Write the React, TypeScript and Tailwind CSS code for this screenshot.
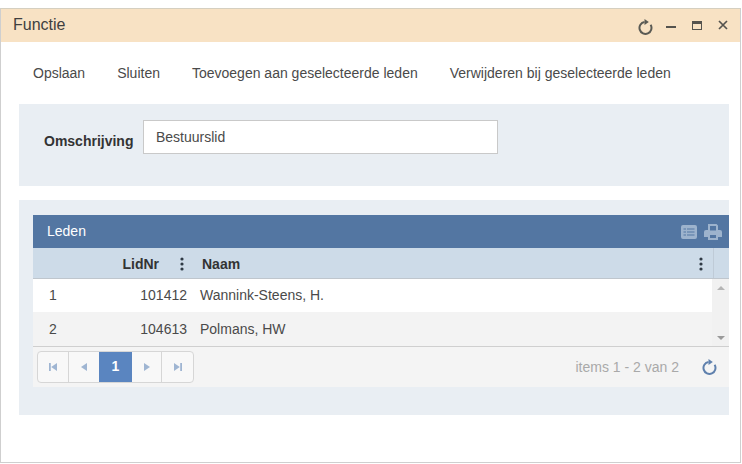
import React from "react";

const Refresh = ({ className }: { className: string }) => (
  <svg viewBox="0 0 15 16" className={className} fill="none">
    <path d="M6.500 3A6 6 0 1 0 12.600 5.800" stroke="currentColor" strokeWidth="2" />
    <path d="M6.500 0 L10.800 3 L6.500 6 Z" fill="currentColor" />
  </svg>
);

const Dots = () => (
  <svg viewBox="0 0 4 14" className="w-[4px] h-[14px]" fill="#2f3a45">
    <circle cx="2" cy="2" r="1.6" />
    <circle cx="2" cy="7" r="1.6" />
    <circle cx="2" cy="12" r="1.6" />
  </svg>
);

const PagerIcon = ({ kind }: { kind: "first" | "prev" | "next" | "last" }) => (
  <svg viewBox="0 0 10 10" className="w-[10px] h-[10px]" fill="#9fb5d2">
    {kind === "first" && <path d="M1 1h1.800v8H1zM9 1v8L3.200 5z" />}
    {kind === "prev" && <path d="M8 1v8L2 5z" />}
    {kind === "next" && <path d="M2 1v8L8 5z" />}
    {kind === "last" && <path d="M1 1v8l5.800-4zM7.200 1H9v8H7.200z" />}
  </svg>
);

export default function App() {
  return (
    <div
      className="w-[742px] h-[464px] bg-white pt-[8px] overflow-hidden text-[14px] text-[#4a4a4a]"
      style={{ fontFamily: '"Liberation Sans", Arial, sans-serif' }}
    >
      <div className="w-[741px] h-[455px] border border-[#cfcfcf] border-t-[#d5cfc0] flex flex-col">
        <div className="h-[33px] shrink-0 bg-[#f8e2c4] flex items-center pl-[12px] pr-[12px]">
          <span className="text-[16px] text-[#3f3f3f] flex-1 -mt-[2px]">Functie</span>
          <div className="flex items-center text-[#5a5a54]">
            <Refresh className="w-[15px] h-[16px] mt-[3px] mr-[13px]" />
            <div className="w-[10px] h-[2px] bg-[#55534e] mr-[16px] mt-[2px]" />
            <div className="w-[10px] h-[9px] border border-[#55534e] border-t-[3px] mr-[16px] -mt-[1px]" />
            <svg viewBox="0 0 10 10" className="w-[10px] h-[10px] -mt-[1px]" stroke="#55534e" strokeWidth="1.7">
              <path d="M1 1l8 8M9 1l-8 8" />
            </svg>
          </div>
        </div>

        <div className="h-[62px] shrink-0 flex items-center gap-[32px] pl-[32px] pt-[1px]">
          <span>Opslaan</span>
          <span>Sluiten</span>
          <span>Toevoegen aan geselecteerde leden</span>
          <span>Verwijderen bij geselecteerde leden</span>
        </div>

        <div className="ml-[18px] w-[710px] h-[82px] shrink-0 bg-[#e9eef3] flex items-start pt-[16px] pl-[25px]">
          <span className="font-bold text-[#333] mt-[11px] w-[99px]">Omschrijving</span>
          <div className="w-[355px] h-[34px] bg-white border border-[#c9c9c9] pl-[12px] flex items-center">
            Bestuurslid
          </div>
        </div>

        <div className="ml-[18px] mt-[14px] w-[710px] h-[215px] shrink-0 bg-[#e9eef3] pt-[15px] pl-[14px]">
          <div className="h-[33px] bg-[#5376a2] flex items-center pl-[14px] pr-[7px] text-white">
            <span className="flex-1 -mt-[1px]">Leden</span>
            <svg viewBox="0 0 16 14" className="w-[16px] h-[14px] mr-[7px] mt-[1px]" fill="#9db3cd">
              <path fillRule="evenodd" d="M2 0h12a2 2 0 0 1 2 2v10a2 2 0 0 1-2 2H2a2 2 0 0 1-2-2V2a2 2 0 0 1 2-2zM2.500 3.500v1h2.500v-1zM6 3.500v1h7.500v-1zM2.500 6.500v1h2.500v-1zM6 6.500v1h7.500v-1zM2.500 9.500v1h2.500v-1zM6 9.500v1h7.500v-1z" />
            </svg>
            <svg viewBox="0 0 18 16" className="w-[18px] h-[16px]" fill="#9db3cd">
              <path fillRule="evenodd" d="M4 0h8.500L14 1.500V6h2a2 2 0 0 1 2 2v5h-4v3H4v-3H0V8a2 2 0 0 1 2-2h2zM6 2v4.500h6V2zM6 11v3h6v-3z" />
            </svg>
          </div>

          <div className="h-[31px] bg-[#cddbe8] border-b border-[#bfc6cd] flex items-center font-bold text-[#333]">
            <div className="w-[126px] text-right mt-[2px]">LidNr</div>
            <div className="w-[25px] flex justify-end mt-[1px]"><Dots /></div>
            <div className="ml-[18px] flex-1 mt-[2px]">Naam</div>
            <div className="w-[14px] mt-[1px]"><Dots /></div>
            <div className="w-[16px] self-stretch border-l border-[#bfcbd7]" />
          </div>

          <div className="flex h-[67px]">
            <div className="flex-1 flex flex-col">
              <div className="h-[33px] bg-white flex items-center">
                <div className="w-[24px] pl-[16px] box-content">1</div>
                <div className="w-[114px] text-right">101412</div>
                <div className="ml-[13px]">Wannink-Steens, H.</div>
              </div>
              <div className="h-[34px] bg-[#f3f3f3] flex items-center">
                <div className="w-[24px] pl-[16px] box-content">2</div>
                <div className="w-[114px] text-right">104613</div>
                <div className="ml-[13px]">Polmans, HW</div>
              </div>
            </div>
            <div className="w-[17px] bg-[#f1f1f1] flex flex-col items-center justify-between py-[7px] pb-[6px]">
              <div className="w-0 h-0 border-x-[4px] border-x-transparent border-b-[4px] border-b-[#b5b5b5]" />
              <div className="w-0 h-0 border-x-[4px] border-x-transparent border-t-[4px] border-t-[#9a9a9a]" />
            </div>
          </div>

          <div className="h-[41px] bg-[#f4f4f4] border-t border-[#cfcfcf] flex items-center pl-[4px] pr-[12px]">
            <div className="flex h-[32px] w-[157px] rounded-[4px] border border-[#d6d6d6] bg-[#f8f8f8] overflow-hidden -mt-[1px]">
              <div className="w-[31px] flex items-center justify-center border-r border-[#d6d6d6]"><PagerIcon kind="first" /></div>
              <div className="w-[30px] flex items-center justify-center"><PagerIcon kind="prev" /></div>
              <div className="w-[33px] -my-px bg-[#5a85c0] text-white font-bold flex items-center justify-center">1</div>
              <div className="w-[30px] flex items-center justify-center border-r border-[#d6d6d6]"><PagerIcon kind="next" /></div>
              <div className="flex-1 flex items-center justify-center"><PagerIcon kind="last" /></div>
            </div>
            <div className="flex-1 text-right text-[#a9a9a9] mr-[23px]">items 1 - 2 van 2</div>
            <Refresh className="w-[15px] h-[16px] text-[#5f80ad]" />
          </div>
        </div>
      </div>
    </div>
  );
}
